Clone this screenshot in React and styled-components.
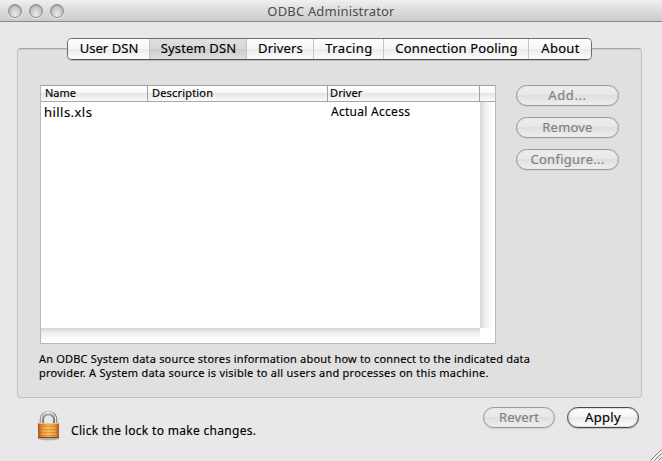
import React from "react";
import styled, { createGlobalStyle } from "styled-components";

const GlobalStyle = createGlobalStyle`
  * { box-sizing: border-box; }
  body {
    margin: 0;
    background: #e8e8e8;
    color: #000;
    font-family: "Noto Sans", "Open Sans", sans-serif;
    -webkit-text-stroke: 0.15px currentColor;
  }
`;

const Window = styled.div`
  width: 662px;
  height: 461px;
  display: flex;
  flex-direction: column;
  background: #e8e8e8;
  overflow: hidden;
`;

const TitleBar = styled.header`
  flex: none;
  height: 22px;
  display: grid;
  grid-template-columns: 70px 1fr 70px;
  align-items: center;
  border-bottom: 1px solid #8a8a8a;
  border-radius: 4px 4px 0 0;
  background: linear-gradient(#f0f0f0, #e2e2e2 35%, #cbcbcb);
`;

const Lights = styled.div`
  display: flex;
  gap: 7px;
  padding-left: 8px;
`;

const Light = styled.span`
  width: 14px;
  height: 14px;
  border-radius: 50%;
  border: 1px solid #8e8e8e;
  background: radial-gradient(ellipse at 50% 85%, #ececec 0, #d0d0d0 45%, #b4b4b4 85%);
  box-shadow: inset 0 1px 1px #9c9c9c, 0 1px 0 #ededed;
`;

const Title = styled.h1`
  margin: 0;
  padding-top: 1px;
  font-size: 13px;
  font-weight: 400;
  line-height: 20px;
  letter-spacing: 0.18px;
  text-align: center;
  color: #4c4c4c;
  -webkit-text-stroke: 0;
`;

const Tabs = styled.nav`
  flex: none;
  width: 525px;
  height: 22px;
  margin: 16px 0 0 67px;
  display: flex;
  border: 1px solid #6c6c6c;
  border-bottom-color: #4e4e4e;
  border-radius: 5px;
  overflow: hidden;
  z-index: 1;
  box-shadow: 0 1px 1px #bcbcbc;
`;

const Tab = styled.button`
  flex: none;
  width: ${(p) => p.$width}px;
  height: 20px;
  padding: 0 0 2px 1px;
  border: 0;
  border-right: ${(p) => (p.$last ? "0" : "1px solid #c4c4c4")};
  background: ${(p) =>
    p.$active
      ? "linear-gradient(#e0e0e0 0, #d6d6d6 48%, #cacaca 50%, #e0e0e0 100%)"
      : "linear-gradient(#fff 0, #f5f5f5 48%, #eaeaea 50%, #fcfcfc 100%)"};
  color: inherit;
  font: 13px/18px "Noto Sans", "Open Sans", sans-serif;
  letter-spacing: ${(p) => p.$track}px;
  white-space: nowrap;
`;

const Group = styled.main`
  flex: none;
  width: 625px;
  height: 350px;
  margin: -12px 0 0 17px;
  padding: 36px 22px 0 22px;
  border: 1px solid #c2c2c2;
  border-top-color: #a6a6a6;
  border-radius: 4px;
  background: #e0e0e0;
  box-shadow: inset 0 1px 0 #d0d0d0;
`;

const Columns = styled.div`
  display: flex;
  justify-content: space-between;
`;

const Table = styled.section`
  width: 456px;
  height: 259px;
  display: grid;
  grid-template-columns: 107px 180px 152px 15px;
  grid-template-rows: 16px 226px 15px;
  border: 1px solid #b8b8b8;
  border-top-color: #a0a0a0;
  background: #fff;
`;

const HeadCell = styled.div`
  padding-left: ${(p) => p.$pad}px;
  border-right: ${(p) => (p.$last ? "0" : "1px solid #a2a2a2")};
  border-bottom: 1px solid #a9a9a9;
  background: linear-gradient(#fff 0, #f7f7f7 45%, #e6e6e6 50%, #fbfbfb 100%);
  font-size: 11px;
  line-height: 14px;
  letter-spacing: ${(p) => p.$track}px;
`;

const Body = styled.div`
  grid-column: 1 / 4;
  display: grid;
  grid-template-columns: 287px 152px;
  grid-template-rows: 20px;
`;

const Cell = styled.div`
  padding-left: 3px;
  font-size: ${(p) => p.$size}px;
  line-height: ${(p) => p.$line}px;
  letter-spacing: ${(p) => p.$track}px;
`;

const VerticalTrack = styled.div`
  background: linear-gradient(90deg, #d6d6d6, #efefef 35%, #fcfcfc 80%, #fff);
`;

const HorizontalTrack = styled.div`
  grid-column: 1 / 4;
  background: linear-gradient(#d6d6d6, #efefef 35%, #fcfcfc 80%, #fff);
`;

const Actions = styled.div`
  width: 103px;
  display: flex;
  flex-direction: column;
  gap: 11px;
`;

const PushButton = styled.button`
  flex: none;
  width: ${(p) => p.$width}px;
  height: 21px;
  padding: 0 0 1px;
  border: 1px solid ${(p) => (p.$enabled ? "#484848" : "#999")};
  border-radius: 11px;
  background: ${(p) =>
    p.$enabled
      ? "linear-gradient(#fff 0, #f5f5f5 45%, #e9e9e9 50%, #fff 100%)"
      : "linear-gradient(#ededed 0, #e8e8e8 45%, #dfdfdf 50%, #f0f0f0 100%)"};
  box-shadow: ${(p) =>
    p.$enabled
      ? "inset 0 0 2px #8a8a8a, 0 1px 1px #bcbcbc"
      : "inset 0 0 1px #b5b5b5, 0 1px 1px #d0d0d0"};
  color: ${(p) => (p.$enabled ? "#000" : "#808080")};
  font: 13px/18px "Noto Sans", "Open Sans", sans-serif;
  letter-spacing: ${(p) => p.$track}px;
`;

const Description = styled.p`
  margin: 8px 0 0 -1px;
  font-size: 11px;
  line-height: 14px;
`;

const Line = styled.span`
  display: block;
  white-space: nowrap;
  letter-spacing: ${(p) => p.$track}px;
`;

const Footer = styled.footer`
  flex: 1;
  display: flex;
  align-items: flex-start;
  padding: 9px 0 0 36px;
`;

const LockLabel = styled.span`
  flex: 1;
  margin: 15px 0 0 10px;
  font-size: 12px;
  line-height: 18px;
  letter-spacing: 0.31px;
`;

const FooterButtons = styled.div`
  display: flex;
  gap: 12px;
`;

const Grip = styled.svg`
  align-self: flex-end;
  flex: none;
  margin-left: 11px;
`;

const LockSvg = styled.svg`
  flex: none;
  margin-top: 3px;
`;

function Lock() {
  return (
    <LockSvg width="25" height="32" viewBox="0 0 25 32">
      <defs>
        <linearGradient id="brass" x1="0" x2="1" y1="0" y2="0">
          <stop offset="0" stopColor="#a9501b" />
          <stop offset="0.15" stopColor="#d98632" />
          <stop offset="0.5" stopColor="#f2b450" />
          <stop offset="0.85" stopColor="#dd8a35" />
          <stop offset="1" stopColor="#a9501b" />
        </linearGradient>
        <linearGradient id="steel" x1="0" x2="1" y1="0" y2="0">
          <stop offset="0" stopColor="#7c7c7c" />
          <stop offset="0.5" stopColor="#c9c9c9" />
          <stop offset="1" stopColor="#6e6e6e" />
        </linearGradient>
      </defs>
      <ellipse cx="12.5" cy="28.5" rx="11" ry="1.7" fill="#b0b0b0" />
      <path d="M5.5 14V9.500a7 7 0 0 1 14 0V14" fill="none" stroke="url(#steel)" strokeWidth="3.600" />
      <path d="M5.300 14V9.500a7.200 7.200 0 0 1 14.400 0V14" fill="none" stroke="#f1f1f1" strokeWidth="1.200" />
      <path d="M7.500 14V9.800a5 5 0 0 1 10 0V14" fill="none" stroke="#555" strokeWidth="0.700" />
      <rect x="2" y="13" width="21" height="15" rx="1" fill="url(#brass)" />
      <path d="M3 13.500H22" stroke="#f2c184" />
      <path d="M3 16.500H22M3 19.500H22M3 22.500H22M3 25.500H22" stroke="#c46d24" strokeOpacity="0.35" />
      <path d="M6 18H19M6 21H19M6 24H19" stroke="#f7d65d" strokeOpacity="0.6" />
      <path d="M2 27.500H23" stroke="#923f17" />
    </LockSvg>
  );
}

const tabs = [
  { label: "User DSN", width: 82, track: 0.05 },
  { label: "System DSN", width: 97, track: 0.15, active: true },
  { label: "Drivers", width: 67, track: 0.15 },
  { label: "Tracing", width: 70, track: 0.4 },
  { label: "Connection Pooling", width: 145, track: 0.16 },
  { label: "About", width: 62, track: 0.3 },
];

const headings = [
  { label: "Name", pad: 4, track: 0 },
  { label: "Description", pad: 4, track: 0.18 },
  { label: "Driver", pad: 2, track: 0.1 },
  { label: "", pad: 0, track: 0 },
];

export default function App() {
  return (
    <>
      <GlobalStyle />
      <Window>
        <TitleBar>
          <Lights>
            <Light />
            <Light />
            <Light />
          </Lights>
          <Title>ODBC Administrator</Title>
        </TitleBar>
        <Tabs>
          {tabs.map((t, i) => (
            <Tab key={t.label} $width={t.width} $track={t.track} $active={t.active} $last={i === tabs.length - 1}>
              {t.label}
            </Tab>
          ))}
        </Tabs>
        <Group>
          <Columns>
            <Table>
              {headings.map((h, i) => (
                <HeadCell key={i} $pad={h.pad} $track={h.track} $last={i === headings.length - 1}>
                  {h.label}
                </HeadCell>
              ))}
              <Body>
                <Cell $size={13} $line={21} $track={0.45}>hills.xls</Cell>
                <Cell $size={12} $line={20} $track={0.28}>Actual Access</Cell>
              </Body>
              <VerticalTrack />
              <HorizontalTrack />
            </Table>
            <Actions>
              <PushButton $width={103} $track={0.6}>Add...</PushButton>
              <PushButton $width={103} $track={0.2}>Remove</PushButton>
              <PushButton $width={103} $track={0.26}>Configure...</PushButton>
            </Actions>
          </Columns>
          <Description>
            <Line $track={0.185}>An ODBC System data source stores information about how to connect to the indicated data</Line>
            <Line $track={0.25}>provider. A System data source is visible to all users and processes on this machine.</Line>
          </Description>
        </Group>
        <Footer>
          <Lock />
          <LockLabel>Click the lock to make changes.</LockLabel>
          <FooterButtons>
            <PushButton $width={72} $track={0.14}>Revert</PushButton>
            <PushButton $width={72} $track={0.3} $enabled>Apply</PushButton>
          </FooterButtons>
          <Grip width="12" height="12" viewBox="0 0 12 12">
            <path d="M0.500 11.500L11.500 0.500M4.500 11.500L11.500 4.500M8.500 11.500L11.500 8.500" stroke="#777" />
            <path d="M2 11.500L12 1.500M6 11.500L12 5.500" stroke="#fff" strokeWidth="0.800" />
          </Grip>
        </Footer>
      </Window>
    </>
  );
}
